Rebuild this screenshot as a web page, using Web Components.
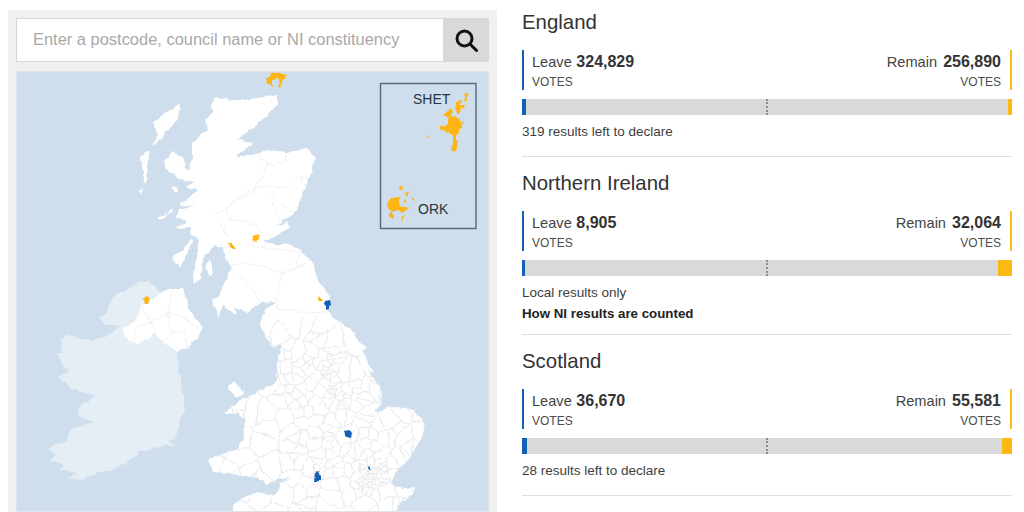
<!DOCTYPE html>
<html lang="en">
<head>
<meta charset="utf-8">
<title>EU referendum results</title>
<style>
html, body { margin: 0; background: #fff; }
</style>
</head>
<body>
<results-page>
    <search-box slot="left" placeholder="Enter a postcode, council name or NI constituency"></search-box>
    <uk-map slot="left"></uk-map>
    <nation-result name="England" leave="324,829" remain="256,890" leave-share="4" remain-share="4">319 results left to declare</nation-result>
    <nation-result compact name="Northern Ireland" leave="8,905" remain="32,064" leave-share="3" remain-share="14">Local results only<br><b>How NI results are counted</b></nation-result>
    <nation-result name="Scotland" leave="36,670" remain="55,581" leave-share="5" remain-share="10">28 results left to declare</nation-result>
</results-page>

<template id="page-tpl">
<style>
:host {
    display: grid;
    grid-template-columns: 489px 490px;
    column-gap: 25px;
    height: 512px;
    padding-left: 8px;
    box-sizing: border-box;
    overflow: hidden;
    font-family: 'Liberation Sans', Arial, sans-serif;
    color: #333;
}
.left {
    display: flex;
    flex-direction: column;
    gap: 9px;
    margin-top: 10px;
    padding: 8px 8px 0;
    background: #f0f0f0;
    overflow: hidden;
}
.right {
    display: flex;
    flex-direction: column;
    padding-top: 10px;
}
</style>
<div class="left"><slot name="left"></slot></div>
<div class="right"><slot></slot></div>
</template>

<template id="search-tpl">
<style>
:host {
    display: flex;
    flex: 0 0 auto;
    height: 44px;
}
.field {
    flex: 1;
    display: flex;
    align-items: center;
    padding: 0 0 2px 16px;
    background: #fff;
    border: 1px solid #d8d8d8;
    border-right: 0;
    font-size: 16.45px;
    color: #a9a9a9;
}
.go {
    flex: 0 0 46px;
    display: flex;
    align-items: center;
    justify-content: center;
    background: #d9d9d9;
}
svg { display: block; }
</style>
<div class="field"></div>
<div class="go">
    <svg width="24" height="24" viewBox="0 0 24 24" fill="none" stroke="#111" stroke-width="3">
        <circle cx="10.5" cy="10.5" r="7.5"/>
        <path d="M16 16l6.5 6.5" stroke-linecap="round"/>
    </svg>
</div>
</template>

<template id="map-tpl">
<style>
:host {
    display: block;
    flex: 1;
    min-height: 0;
    background: #cedeec;
    outline: 1px solid #dfe4e9;
    outline-offset: -1px;
    overflow: hidden;
}
svg { display: block; }
text { font: 14px 'Liberation Sans', Arial, sans-serif; fill: #2b3440; }
.ire { fill: #e6eef5; }
.land { fill: #fff; }
.bound { fill: none; stroke: #e9eaed; stroke-width: .7; }
.y { fill: #fdb515; }
.b { fill: #1261b4; }
</style>
<svg width="473" height="441" viewBox="16 71 473 441">
    <defs>
        <clipPath id="gb"><path id="gb-shape" d="M215 97L230 100 245 100 263 97 277 94 277 105 268 115 257 125 243 135 238 140 253 142 245 150 237 155 235 158 248 155 255 155 267 150 287 152 307 149 315 158 312 172 305 187 302 197 295 213 282 222 273 227 287 222 290 228 277 235 263 242 277 245 287 243 300 250 312 263 320 283 330 298 328 310 333 318 350 328 360 343 367 347 362 350 373 372 367 368 380 387 382 397 380 403 375 412 392 407 410 408 422 418 425 432 418 445 408 460 400 468 390 483 403 488 415 487 412 495 400 505 393 512 231 512 242 497 257 493 275 495 282 483 290 477 277 480 267 485 257 478 240 475 223 473 213 472 208 460 220 455 238 448 243 437 245 420 237 413 225 414 233 405 247 397 257 392 272 385 273 387 278 373 278 357 283 345 272 347 263 330 260 323 267 308 275 302 260 303 247 312 235 308 237 315 223 305 218 318 212 300 218 297 227 277 232 268 225 258 223 248 215 245 208 252 203 262 201 278 193 284 195 268 197 250 199 240 190 232 190 227 175 228 187 222 175 218 180 210 195 205 180 207 185 200 198 190 185 187 195 182 185 180 177 177 168 172 163 162 173 152 183 157 185 168 192 172 190 170 192 157 192 143 198 138 208 130 205 120 213 113 212 103Z"/></clipPath>
        <filter id="rough" filterUnits="userSpaceOnUse" x="16" y="71" width="473" height="441" color-interpolation-filters="sRGB">
            <feTurbulence type="fractalNoise" baseFrequency=".13" numOctaves="2" seed="4" result="n"/>
            <feDisplacementMap in="SourceGraphic" in2="n" scale="5" xChannelSelector="R" yChannelSelector="G"/>
            <feGaussianBlur stdDeviation=".35"/>
        </filter>
    </defs>
    <g filter="url(#rough)">
    <path class="ire" d="M100 318L108 312 112 298 123 292 140 282 148 280 157 288 165 300 177 353 178 367 183 393 185 407 180 420 175 440 168 442 175 445 155 447 140 452 120 467 97 473 80 480 68 478 77 473 60 470 63 465 50 460 55 455 48 447 65 442 73 427 95 422 78 417 80 407 95 395 82 392 70 387 58 377 68 372 57 355 63 352 60 340 68 335 90 340 105 337 120 327 108 325Z"/>
    <path class="land" d="M122 328L137 320 140 305 145 303 158 295 168 288 183 288 188 307 195 317 203 327 198 337 188 348 177 352 163 342 155 332 147 340 135 345 125 335Z"/>
    <path class="land" d="M180 103L173 108 153 122 157 133 153 145 163 138 170 128 178 118Z"/>
    <path class="land" d="M140 155L150 150 147 168 147 182 143 183 143 165Z"/>
    <path class="land" d="M138 190L143 188 141 193ZM157 218L165 214 171 208 172 211 160 220ZM172 187L178 186 178 192 174 192Z"/>
    <path class="land" d="M172 260L180 267 187 255 193 240 190 238 184 250 176 254Z"/>
    <path class="land" d="M205 263L210 261 213 268 213 275 207 274Z"/>
    <path class="land" d="M228 385L235 383 245 393 237 398 230 390Z"/>
    <use href="#gb-shape" class="land"/>
    <g clip-path="url(#gb)" id="mesh"></g>
    <path class="bound" d="M255 155L267 162 265 173 255 187 240 197 225 210 213 213M287 152L285 162 272 165 267 162M307 177L300 178 305 187M297 177L287 187 268 187 255 187M268 193L287 208 295 213M255 187L253 193 230 203 225 210 230 220 250 222 263 233M272 203L280 222M220 223L227 237 230 253M246 240L255 247 280 250 300 252M230 265L247 263 263 267 283 273 307 263M247 283L254 292 260 303M283 273L279 285 277 297 277 308M277 308L300 312 327 313M232 268L247 283M300 252L296 266"/>
    <path class="bound" d="M140 305L150 322 168 313 172 288M168 313L185 318 197 330M150 322L158 332M168 313L171 333 163 342M171 333L185 330 188 348M135 345L133 330 150 322"/>
    <g class="y">
        <path d="M447 110L451 108 452 117 455 116 458 117 461 122 463 126 458 128 459 133 457 134 457 140 455 152 452 150 453 142 453 137 447 132 441 129 441 126 448 125 450 119 443 115Z"/>
        <path d="M457 103L462 100 460 113 456 113ZM465 93L468 94 465 102 463 100ZM461 106L466 106 464 109ZM427 137L430 136 428 139ZM463 122L465 121 464 124Z"/>
        <path d="M390 198L398 197 401 206 409 208 402 212 397 211 394 213 388 208ZM388 212L392 212 395 217 392 219 388 216Z"/>
        <path d="M401 185L404 186 403 190 400 188ZM404 193L409 192 406 196ZM403 200L406 199 405 204ZM410 193L416 188 411 192ZM412 198L415 200 413 201ZM401 216L404 214 402 221Z"/>
        <path d="M268 72L287 75 285 79 282 80 281 88 278 87 279 79 273 80 273 87 267 83 266 78 271 76Z"/>
        <path d="M252 236L256 235 260 234 259 239 256 241 254 240ZM229 242L232 242 236 250 230 248ZM143 298L150 297 148 303 144 304ZM317 301L320 296 323 301Z"/>
    </g>
    <g class="b">
        <path d="M325 301L330 300 331 304 329 306 329 309 326 310 326 306 324 304ZM344 431L348 430 352 434 351 438 347 437 345 436ZM315 473L318 472 321 476 320 481 314 481ZM368 469L370 466 370 470Z"/>
    </g>
    </g>
    <rect x="380.5" y="83.5" width="95.5" height="145" fill="none" stroke="#56677a" stroke-width="1.4"/>
    <text x="413" y="104">SHET</text>
    <text x="418" y="214">ORK</text>
</svg>
</template>

<template id="result-tpl">
<style>
:host {
    display: block;
    flex: 0 0 auto;
    padding: 14px 0;
    border-bottom: 1px solid #dedede;
}
:host(:first-of-type) { padding-top: 0; }
:host([compact]) { padding-bottom: 10px; }
h2 {
    margin: 0 0 16px;
    font-size: 20.4px;
    line-height: 24px;
    font-weight: 400;
    color: #333;
}
.tallies {
    display: flex;
    justify-content: space-between;
}
.bar {
    position: relative;
    display: flex;
    justify-content: space-between;
    height: 16px;
    margin: 9px 0 6px;
    background: #d9d9d9;
}
.bar i { display: block; }
.leave { background: #1261b4; }
.remain { background: #fdb913; }
.mid {
    position: absolute;
    left: 244px;
    top: 0;
    height: 100%;
    border-left: 2px dotted #8c8c8c;
}
.note {
    font-size: 13.5px;
    line-height: 21px;
    color: #404040;
}
::slotted(b) { color: #222; font-size: 13.3px; }
</style>
<h2></h2>
<div class="tallies">
    <vote-tally side="leave" label="Leave"></vote-tally>
    <vote-tally side="remain" label="Remain"></vote-tally>
</div>
<div class="bar">
    <i class="leave"></i>
    <i class="remain"></i>
    <span class="mid"></span>
</div>
<div class="note"><slot></slot></div>
</template>

<template id="tally-tpl">
<style>
:host {
    display: block;
    height: 40px;
    padding-left: 8px;
    border-left: 2px solid #1261b4;
    box-sizing: border-box;
}
:host([side="remain"]) {
    padding: 0 9px 0 0;
    border-left: 0;
    border-right: 2px solid #fdb913;
    text-align: right;
}
.line {
    font-size: 14.6px;
    line-height: 24px;
    color: #444;
}
b {
    margin-left: .5px;
    font-size: 16px;
    color: #333;
}
:host([side="remain"]) b { margin-left: 2px; }
.unit {
    font-size: 12px;
    line-height: 16px;
    color: #4d4d4d;
}
</style>
<div class="line"><span class="label"></span> <b class="num"></b></div>
<div class="unit">VOTES</div>
</template>

<script>
function fromTpl(el, id) {
    const root = el.attachShadow({ mode: 'open' });
    root.appendChild(document.getElementById(id).content.cloneNode(true));
    return root;
}

class ResultsPage extends HTMLElement {
    constructor() {
        super();
        fromTpl(this, 'page-tpl');
    }
}

class SearchBox extends HTMLElement {
    constructor() {
        super();
        fromTpl(this, 'search-tpl');
    }
    connectedCallback() {
        this.shadowRoot.querySelector('.field').textContent = this.getAttribute('placeholder');
    }
}

// one voronoi cell: the box cut down by the half plane of every other site
function cell(site, sites, box) {
    let poly = box;
    for (const o of sites) {
        if (o === site) continue;
        const mx = (site[0] + o[0]) / 2, my = (site[1] + o[1]) / 2;
        const nx = o[0] - site[0], ny = o[1] - site[1];
        const side = p => (p[0] - mx) * nx + (p[1] - my) * ny;
        const out = [];
        poly.forEach((p, i) => {
            const q = poly[(i + 1) % poly.length];
            const a = side(p), b = side(q);
            if (a <= 0) out.push(p);
            if (a * b < 0) {
                const t = a / (a - b);
                out.push([p[0] + (q[0] - p[0]) * t, p[1] + (q[1] - p[1]) * t]);
            }
        });
        poly = out;
    }
    return poly;
}

class UkMap extends HTMLElement {
    constructor() {
        super();
        fromTpl(this, 'map-tpl');
    }
    connectedCallback() {
        // council boundaries are only texture, so seeded voronoi cells do the job
        let seed = 11;
        const rnd = () => (seed = (seed * 16807) % 2147483647) / 2147483647;
        // x0, y0, x1, y1, sites: denser around the cities
        const areas = [
            [262, 322, 375, 362, 14],
            [278, 350, 335, 400, 45],
            [330, 360, 385, 410, 14],
            [208, 395, 285, 480, 14],
            [285, 395, 375, 470, 70],
            [375, 405, 430, 470, 18],
            [231, 470, 415, 530, 50],
            [356, 462, 384, 492, 40]
        ];
        const sites = [];
        for (const [x0, y0, x1, y1, n] of areas) {
            for (let i = 0; i < n; i++) {
                sites.push([x0 + rnd() * (x1 - x0), y0 + rnd() * (y1 - y0)]);
            }
        }
        const box = [[200, 318], [440, 318], [440, 530], [200, 530]];
        const onBox = p => p[0] <= 200 || p[0] >= 440 || p[1] <= 318 || p[1] >= 530;
        let d = '';
        for (const s of sites) {
            const poly = cell(s, sites, box);
            poly.forEach((p, i) => {
                const q = poly[(i + 1) % poly.length];
                if (onBox(p) && onBox(q)) return;
                d += `M${p[0].toFixed(1)} ${p[1].toFixed(1)}L${q[0].toFixed(1)} ${q[1].toFixed(1)}`;
            });
        }
        const path = document.createElementNS('http://www.w3.org/2000/svg', 'path');
        path.setAttribute('class', 'bound');
        path.setAttribute('d', d);
        this.shadowRoot.getElementById('mesh').appendChild(path);
    }
}

class NationResult extends HTMLElement {
    constructor() {
        super();
        fromTpl(this, 'result-tpl');
    }
    connectedCallback() {
        const root = this.shadowRoot;
        root.querySelector('h2').textContent = this.getAttribute('name');
        root.querySelector('[side=leave]').setAttribute('votes', this.getAttribute('leave'));
        root.querySelector('[side=remain]').setAttribute('votes', this.getAttribute('remain'));
        root.querySelector('.leave').style.width = this.getAttribute('leave-share') + 'px';
        root.querySelector('.remain').style.width = this.getAttribute('remain-share') + 'px';
    }
}

class VoteTally extends HTMLElement {
    static get observedAttributes() { return ['votes']; }
    constructor() {
        super();
        fromTpl(this, 'tally-tpl');
    }
    attributeChangedCallback() {
        this.shadowRoot.querySelector('.label').textContent = this.getAttribute('label');
        this.shadowRoot.querySelector('.num').textContent = this.getAttribute('votes');
    }
}

customElements.define('vote-tally', VoteTally);
customElements.define('nation-result', NationResult);
customElements.define('uk-map', UkMap);
customElements.define('search-box', SearchBox);
customElements.define('results-page', ResultsPage);
</script>
</body>
</html>
